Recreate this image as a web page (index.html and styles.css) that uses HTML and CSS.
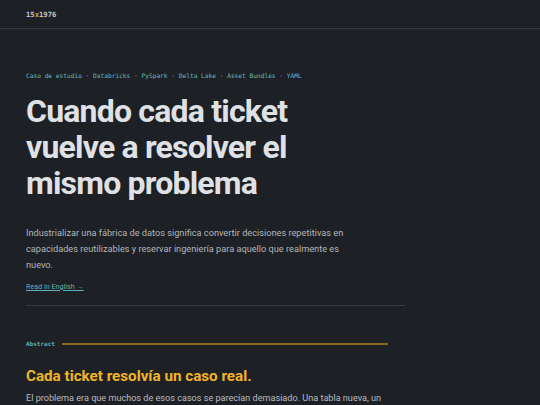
FILE: index.html
```html
<!DOCTYPE html>
<html lang="es">
<head>
<meta charset="utf-8">
<link rel="stylesheet" href="styles.css">
</head>
<body>
<header class="topbar">
  <a class="logo" href="#">15<span class="logo-x">x</span>1976</a>
</header>
<main class="page">
  <p class="crumbs">Caso de estudio · Databricks · PySpark · Delta Lake · Asset Bundles · YAML</p>
  <h1 class="title">Cuando cada ticket vuelve a resolver el mismo problema</h1>
  <p class="lead">Industrializar una fábrica de datos significa convertir decisiones repetitivas en capacidades reutilizables y reservar ingeniería para aquello que realmente es nuevo.</p>
  <a class="lang" href="#">Read in English →</a>
  <hr class="divider">
  <div class="section-label"><span class="label-text">Abstract</span><span class="label-line"></span></div>
  <h2 class="subtitle">Cada ticket resolvía un caso real.</h2>
  <p class="body">El problema era que muchos de esos casos se parecían demasiado. Una tabla nueva, un</p>
</main>
</body>
</html>
```
FILE: styles.css
```css
* { box-sizing: border-box; }
html, body { margin: 0; padding: 0; }
body {
  background: #1d2024;
  color: #dfe1e4;
  font-family: "Roboto", "Noto Sans", sans-serif;
  width: 540px;
  height: 405px;
  overflow: hidden;
}
.topbar {
  height: 29px;
  border-bottom: 1px solid #33373c;
  display: flex;
  align-items: center;
  padding-left: 26px;
}
.logo {
  font-family: "DejaVu Sans Mono", monospace;
  font-size: 7.2px;
  font-weight: bold;
  color: #c3c6ca;
  text-decoration: none;
}
.logo-x { color: #d9a520; }
.page {
  padding: 0 26px;
  width: 431px;
}
.crumbs {
  margin: 43px 0 0;
  font-family: "DejaVu Sans Mono", monospace;
  font-size: 6.2px;
  color: #66b8c4;
  line-height: 8px;
}
.title {
  margin: 13px 0 0;
  max-width: 290px;
  font-size: 32px;
  line-height: 36px;
  font-weight: 700;
  color: #dfe1e5;
  letter-spacing: -0.8px;
}
.lead {
  margin: 24px 0 0;
  font-size: 9.2px;
  line-height: 16px;
  color: #b3b6ba;
  max-width: 320px;
}
.lang {
  display: inline-block;
  margin-top: 9px;
  font-size: 7.2px;
  color: #5fb0bd;
  text-decoration: underline;
}
.divider {
  border: 0;
  border-top: 1px solid #373b40;
  margin: 12px 0 0;
}
.section-label {
  display: flex;
  align-items: center;
  gap: 7px;
  margin-top: 34px;
  width: 362px;
}
.label-text {
  font-family: "DejaVu Sans Mono", monospace;
  font-size: 6px;
  font-weight: bold;
  color: #5fb0bd;
}
.label-line {
  flex: 1;
  border-top: 2px solid #86691d;
}
.subtitle {
  margin: 20px 0 0;
  font-size: 15.2px;
  font-weight: 700;
  color: #f0b428;
}
.body {
  margin: 5px 0 0;
  font-size: 9.1px;
  line-height: 16px;
  color: #b9bcc0;
}
```
